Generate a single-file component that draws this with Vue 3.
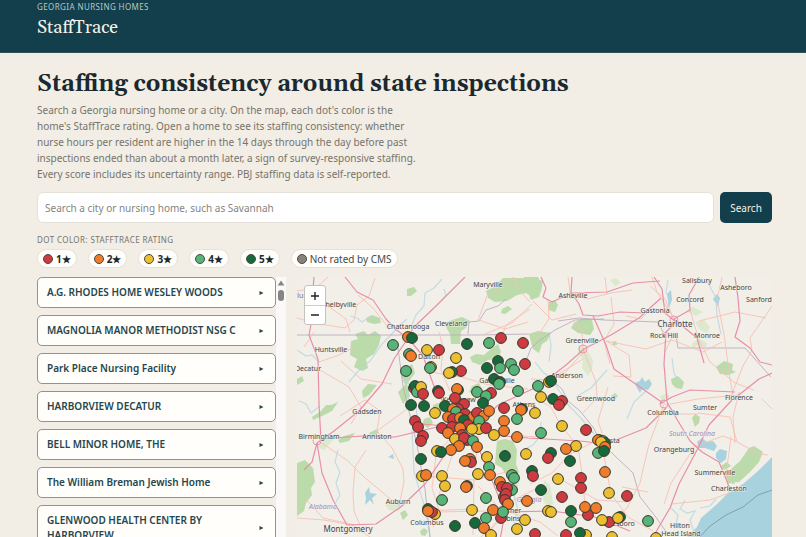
<script setup>
import { ref } from 'vue'

const query = ref('')

const legend = [
  { label: '1★', tone: 'r' },
  { label: '2★', tone: 'o' },
  { label: '3★', tone: 'y' },
  { label: '4★', tone: 'g' },
  { label: '5★', tone: 'd' },
]

const homes = [
  'A.G. RHODES HOME WESLEY WOODS',
  'MAGNOLIA MANOR METHODIST NSG C',
  'Park Place Nursing Facility',
  'HARBORVIEW DECATUR',
  'BELL MINOR HOME, THE',
  'The William Breman Jewish Home',
  'GLENWOOD HEALTH CENTER BY HARBORVIEW',
]

// Each entry: rating tone, then x and y on the map canvas.
const dots = `o408,337 d412,338 g393,345 g409,354 o411,356 g406,371 r414,388 d415,386 g417,392 y421,387 r423,394
y427,350 r439,350 d467,344 g489,343 r501,338 r523,343 y456,358 y431,367 g430,368 r461,371 d452,372 y449,373
d498,361 g511,364 d487,368 g500,368 g514,370 r525,364 d494,379 d500,382 g499,384 g518,391 g538,386 d458,390 o457,389
r491,393 g477,392 g486,396 d438,391 r439,393 r455,398 r464,404 d483,403 d411,405 d424,406 d445,406 y549,382 d551,381
y541,397 d553,399 r562,401 r559,405 y435,413 r458,409 o453,409 d456,414 g456,412 o448,417 r453,419 r465,414 o460,418
o473,417 r477,413 d464,420 o484,416 o489,411 r468,425 g479,421 r504,408 d522,409 o521,410 g517,419 y535,413 o504,421
o504,431 o517,437 g541,433 r442,428 r452,427 o448,433 o460,428 r462,435 y479,429 y472,429 r486,428 y494,435 r458,441
y455,439 r467,440 r464,438 g473,441 o477,447 o459,446 o451,450 y437,451 d441,452 r415,421 r418,427 r423,436 r421,441
d421,459 o470,459 r471,462 o465,461 y487,457 d505,456 y526,454 g489,467 y478,474 o490,475 y422,476 o426,475 y442,476
y445,486 d467,486 o466,487 g442,500 g512,475 g514,478 d532,471 r533,476 o500,482 r502,487 g512,490 r507,488 r504,497
r506,494 r505,500 o508,504 o527,501 g486,498 y472,510 o493,510 r501,518 g503,512 g486,518 d475,523 d455,526 o484,528
y491,535 y525,520 y517,529 r535,534 d428,509 y435,514 r432,512 o428,511 y562,426 r586,430 y576,446 o566,449 d551,453
r548,458 d570,461 d599,440 o598,440 g603,441 d605,443 y601,442 o605,447 g598,453 d604,451 o605,472 y558,479 r581,478
r581,488 d541,490 r562,497 y609,493 r627,496 y548,511 y551,512 d571,511 g571,522 r588,515 o585,507 o596,508 r609,522
y602,520 d620,517 y618,518 g648,521 r566,535 y586,535 d580,533 y612,537 y656,538`
  .trim()
  .split(/\s+/)
  .map((entry) => {
    const [x, y] = entry.slice(1).split(',').map(Number)
    return { tone: entry[0], x, y }
  })

const places = [
  ['Maryville', 488, 287], ['Asheville', 573, 298], ['Salisbury', 697, 283], ['Asheboro', 736, 290],
  ['Concord', 690, 302], ['Sanford', 759, 302], ['Gastonia', 655, 313], ['Rock Hill', 664, 338],
  ['Monroe', 707, 338], ['Shelbyville', 339, 307], ['Columbia', 320, 298, 'clip'], ['Chattanooga', 408, 329],
  ['Cleveland', 451, 326], ['Huntsville', 331, 352], ['Decatur', 308, 371], ['Dalton', 429, 359],
  ['Greenville', 582, 343], ['Anderson', 567, 378], ['Greenwood', 596, 401], ['Gainesville', 497, 383],
  ['Kennesaw', 459, 402], ['Athens', 524, 407], ['Florence', 739, 400], ['Gadsden', 367, 414], ['Columbia', 663, 415],
  ['Sumter', 705, 410], ['Birmingham', 319, 439], ['Anniston', 377, 439], ['Augusta', 606, 443],
  ['Orangeburg', 674, 452], ['Summerville', 715, 475], ['Charleston', 729, 491], ['Auburn', 398, 504],
  ['Columbus', 427, 525], ['Warner', 509, 513], ['Robins', 509, 521], ['Statesboro', 617, 526],
  ['Hilton', 680, 528], ['Head Island', 681, 536],
].map(([name, x, y, kind]) => ({ name, x, y, kind }))
</script>

<template>
  <div class="page">
    <header class="masthead">
      <p class="eyebrow">GEORGIA NURSING HOMES</p>
      <a class="brand" href="#">StaffTrace</a>
    </header>

    <main class="content">
      <h1>Staffing consistency around state inspections</h1>
      <p class="intro">
        Search a Georgia nursing home or a city. On the map, each dot's color is the
        home's StaffTrace rating. Open a home to see its staffing consistency: whether
        nurse hours per resident are higher in the 14 days through the day before past
        inspections ended than about a month later, a sign of survey-responsive staffing.
        Every score includes its uncertainty range. PBJ staffing data is self-reported.
      </p>

      <form class="search" @submit.prevent>
        <input
          v-model="query"
          type="text"
          aria-label="Search a city or nursing home"
          placeholder="Search a city or nursing home, such as Savannah"
        />
        <button type="submit">Search</button>
      </form>

      <p class="legend-title">DOT COLOR: STAFFTRACE RATING</p>
      <ul class="legend">
        <li v-for="item in legend" :key="item.label">
          <span class="swatch" :class="item.tone"></span><b>{{ item.label }}</b>
        </li>
        <li><span class="swatch n"></span>Not rated by CMS</li>
      </ul>

      <div class="browse">
        <div class="list-pane">
          <div class="list">
            <button v-for="home in homes" :key="home" type="button" class="home">
              <span>{{ home }}</span>
              <svg class="caret" viewBox="0 0 4 4" aria-hidden="true"><path d="M0 0L4 2L0 4Z" /></svg>
            </button>
          </div>
          <div class="scrollbar" aria-hidden="true">
            <svg viewBox="0 0 8 6"><path d="M4 0.5L7.4 5.5H0.6Z" /></svg>
            <span></span>
          </div>
        </div>

        <div class="map">
          <svg class="canvas" viewBox="297 277 475 260" preserveAspectRatio="xMinYMin slice">
            <g class="forest">
              <path d="M486 291l8-4 9-9h31l9 3-2 11-7 6-8-5-9 2-10 6-12 1-7-4z" />
              <path d="M524 277h14l4 9-3 11-8 3-3-8zM549 302l6-2 3 5-3 7-7-2zM502 309l6-3 4 3-7 5-4-1z" />
              <path d="M351 341l7-2-3-5 9-3 4 4 7-4 6 5-2 9-5 9-8 5 2 9-6 3-8-4 3-8-7-4z" />
              <path d="M366 318l6-3 8 3 1 5-7 1-7-2zM407 289l7-2 3 4-6 5-4 0zM449 321l13-4 8 4-4 7-5 3-1 13h-9l-1-10-4-7z" />
              <path d="M470 357l6-3 8 1 7-6 7-5 3 8-4 7-9 1-8 5-8-3zM472 386l7-3 3 6-6 6-7-3z" />
              <path d="M574 323l7-4 11 1 2 9-4 6-12-2-7-5zM529 334l9-3 13 2-4 8-5 3-3 9-6-4-2-7z" />
              <path class="pale" d="M578 345l8 4 7 11-1 10-4 6-6-8 1-9-5-6z" />
              <path d="M716 367l8-6 9 3-1 6 4 2-8 3-8-1zM671 379l7-3 6 6-2 7-6-1-4-4z" />
              <path class="pale" d="M692 343l7-4 8 4-1 4-9-1-5 2zM695 322l9-2 6 7-3 6-7-3z" />
              <path d="M400 372l12-8 3 9-8 11 3 12-7 8-5-12 7-7zM297 379l5-3 2 5-7 4zM312 417l9-6 5-6 5 0 7-3-6 9-10 5-9 4z" />
              <path d="M297 463l8-3 8 8 2 14-4 6 1 7-6 8-2 8-7 5z" />
              <path class="pale" d="M318 447l8-9 10-4 5 1-9 6-8 9z" />
              <path d="M338 440l6-4 11-3-6 8-9 2z" />
              <path d="M362 391l6-7 9 1-8 10-6 3zM369 433l8-4 2 4-9 4z" />
              <path d="M497 441l8-2 8 2 4 9-1 14 3 8-4 8-8-3-5-9-7-4 1-13z" />
              <path class="pale" d="M507 480l6-4 6 5-1 9-7 1zM385 505l8-4 10 4-4 6-10-1z" />
              <path d="M400 513l5-3 3 5-5 5zM420 531l4-3 4 3-3 5-4-1z" />
              <path d="M731 469l9-8 9-13 5-2 9 6-4 10-9 10-11 10-12 1z" />
              <path d="M692 418l3-4 5 3-1 6-4 4zM725 474l7 3 3 7-6-1zM721 466l6-4 4 4-7 4z" />
              <path d="M433 405l8-3 5 4-5 8-8-3zM424 419l6-2 3 6-5 5-5-3z" />
              <path class="pale" d="M544 480l6 5 3 18-3 9-7-12z" />
              <path d="M611 396l4-3 3 3-3 3zM612 342l4-1 1 4-4 0z" />
              <path class="pale" d="M610 280l6-2 5 5-6 3zM660 396l8-3 2 6-8 3zM686 311l7-4 10 5-7 4z" />
            </g>
            <g class="water">
              <path d="M772 457l-14 14-15 13-16 10-11 11-15 13-4 9-17 17h92z" />
              <path d="M697 442l5-4 5 4 6-1 4 5-3 5-9-3-6 0zM716 453l4-4 7 2-1 8-5 4-5-5z" />
              <path d="M635 383l5-2 2-4 3 5 4-3 3 5-4 6-6-1-2 4-3-5zM713 299l4-5 3 4-2 8zM667 294l4-4 1 10-3 8z" />
              <path d="M365 493l4-6 1 6 7 1-5 4 2 7-4-5-5 5 1-7zM388 457l5-3 1 5z" />
            </g>
            <g class="streams">
              <path d="M297 350l9 6 6-1 7 7M349 382l12-14 9-7 12-17 9-9 8-9 8-7" />
              <path d="M411 327l5-12 8-9 1-13 9-5 8-9M442 300l4-5-2-6M350 316l7 2 5 4 9-6" />
              <path d="M535 362l8 10 12 9 2 7 7 9 5 9 11 11 14 17M549 332l2 14-2 16" />
              <path d="M668 280l-2 12 4 8-4 12M707 281l9 17 1 18 4 18M672 358l2 15 5 9" />
              <path d="M338 450l-3 12 5 10-4 11 4 12-4 7M402 377l8 8-3 12 9 9 1 10" />
              <path d="M412 430l2 42 11 36 5 29M514 495l4 15-4 13M607 370l-16 18-15 9" />
              <path d="M685 500l-5 9 7 4 8-2-5 9 4 12M671 508l7 7-3 13M716 499l-6 7-10 2" />
              <path d="M299 401l7 3 5 9 9-7M525 449l8-4 7-9 1-14M627 419l7-17 12-11" />
            </g>
            <g class="borders">
              <path d="M297 335h180l52-1M398 348l5 38 14 59 8 44 5 48M468 334l1-12 10-1 7-11 12-4 8-7M558 321l21-3 25 2 54 2 5 10 13 3 2 13h67l26 29" />
              <path d="M526 361l5-13 8-7 16-11 20-10 29-1M552 380l10 9 6 12 12 10 13 16 8 15 14 14 18 17 7 24 15 19 12 17" />
              <path class="sea" d="M772 490l-14 5-15 12-17 8-16 11-14 15" />
            </g>
            <g class="roads minor">
              <path d="M297 318l17 5 31 5 9-8 3-15 12-9 6-18M324 303l22 16 4 13M297 291l19-3 12-11M398 328l-11-2-14-18-15-13M314 332l-10 15" />
              <path d="M319 362l20-7 15-8M341 361l20 18 31 5M320 370l29 17 12 20-10 17M377 431l3-20-15-11-25 16M377 431l30-22" />
              <path d="M366 450l-11 17-2 26 1 18 6 14M377 431l15 17 11 21 1 13-5 24M319 441l29 20 16 16 24 20 12 9M297 518l27 2 28 5 18 12M355 525l-32-7-18-20" />
              <path d="M478 320l9-24 12-7 15-12M439 332l4 15-2 23 9 21M485 334l27-11 20-19M514 277l4 12 12 13M479 320l26 9 23-7M530 309l-24 16-7 19" />
              <path d="M533 301l19 19 24-6M548 299l1 20-16 24M571 299l-3-22M571 293l16 6 24-6 21-3M607 294l-2-17M611 297l3 27-10 17 6 23M583 350l-1-20-12-13M585 350l-22 25-10 3M583 349l13 33 1 16-14 15" />
              <path d="M583 359l-34 21-18-1M606 341l23 14 2 22-18-1M606 341l40 8 26-9 31 12 19-10M673 335l-8 17M690 310l9 30 11 22 25 21 19 7M722 277l-5 22 7 35 6 45 4 20" />
              <path d="M650 286l15 13 9 20M650 310l-9 9-15-3M674 319l-17-27-5-15M699 321l36-9 31 6M772 306l-22 32 2 12-9 16-12 30M762 399l10 10M739 392l-6 25 2 26M670 404l28-5 40-4" />
              <path d="M698 413l32 4 7 25 22 12 9 1M664 403l13 11 21 0M690 454l-19 29-7 21M688 449l35-13 13 5M672 504l38-4 19-7M731 437l-5 38 3 18" />
              <path d="M536 398l15 9 10 19 17 20 5 35 2 26M530 484l22-11 17-18 26-14M605 442l-7-21 10-34M604 456l7 38 17 23 25 14M664 404l-15 40-9 39-13 25-17 15M562 480l35 20 30 2M622 487l26 5" />
              <path d="M430 372l31 5 28 8 39 4M424 420l-7 24M458 428l-22 28-4 32 7 22-6 17M461 429l-22 66M479 428l-5 50-1 57M478 486l25 26-16 24M423 476l52 4 43-11M436 512l55-1 53-26M520 436l22 1M472 509l-45 2M480 538l29-26 31 10 18 14" />
            </g>
            <g class="roads">
              <path d="M345 277l12 15 16 8 13 19 9 10 13 9M408 338l5-10 23-22 29-29M408 338l-14 21-12 25-23 27-25 20-17 12-5 19-8 8" />
              <path d="M314 277l-2 24 1 13-4 21 9 24 1 45 2 37M317 443l5 30 11 27 14 25M347 525l29-1 26-18 23-22 23-34 12-20M319 439l43-3 33 1 42-10" />
              <path d="M408 338l15 18 12 33 24 38M459 427l-38-3M459 427l15 3 24-25 41-19 27-21 18-16 27-14 28-17 22-20" />
              <path d="M541 277l5 11-3 9 9 5 20-9 35-1 26-9 27-2M572 277l-1 15 8 12 4 11 15 1 22-4 25 1M593 316l13 29 8 24 23 16 26 18" />
              <path d="M459 427l33 8 36 3 52 3 26 3 40-16 20-20M459 427l20 22 26 63-5 28M504 512l48-1 43 6 35 14" />
              <path d="M654 277l8 12 3 24 11 9-10 10-2 32 3 37M674 319l16-9-1-15 13-23M674 319l23 19 7 25" />
              <path d="M735 277l3 21 2 23-5 16 15 11 10 14 12 3M735 398l24-19 13-6M667 402l11 19 12 20 12 11 17 10 12 29" />
              <path d="M735 392l-45-2-18 7-12 7M732 400l-23 25-12 25-18 34-9 24-17 29" />
            </g>
            <g class="forks">
              <circle cx="317" cy="441" r="4" /><circle cx="583" cy="349" r="4" /><circle cx="664" cy="404" r="4" />
              <circle cx="674" cy="320" r="4" /><circle cx="459" cy="427" r="6" />
            </g>
            <g class="labels">
              <text v-for="(p, i) in places" :key="i" :x="p.x" :y="p.y" :class="{ edge: p.kind }">{{ p.name }}</text>
              <text class="major" x="675" y="327">Charlotte</text>
              <text class="major" x="348" y="532">Montgomery</text>
              <text class="state" x="692" y="436">South Carolina</text>
              <text class="state" x="323" y="509">Alabama</text>
              <text class="state" x="529" y="502">Georgia</text>
            </g>
            <g class="dots">
              <circle v-for="(d, i) in dots" :key="i" :cx="d.x" :cy="d.y" r="5.4" :class="d.tone" />
            </g>
          </svg>
          <div class="zoom">
            <button type="button" aria-label="Zoom in"><svg viewBox="0 0 10 10"><path d="M5 1V9M1 5H9" /></svg></button>
            <button type="button" aria-label="Zoom out"><svg viewBox="0 0 10 10"><path d="M1 5H9" /></svg></button>
          </div>
        </div>
      </div>
    </main>
  </div>
</template>

<style>
body {
  margin: 0;
  background: #f2ede5;
}
</style>

<style scoped>
* {
  box-sizing: border-box;
}
.page {
  display: flex;
  flex-direction: column;
  height: 100vh;
  overflow: hidden;
  background: #f2ede5;
  color: #1b292f;
  font-family: "Noto Sans", "Open Sans", sans-serif;
  font-size: 10px;
}
p,
h1,
ul {
  margin: 0;
  padding: 0;
}
button,
input {
  font: inherit;
}
.masthead {
  flex: none;
  padding: 2px 37px 13px;
  background: #123f4b;
  border-bottom: 1px solid #31535a;
}
.eyebrow {
  color: #b7c7c8;
  font-size: 8px;
  line-height: 10px;
  letter-spacing: 0.4px;
}
.brand {
  display: block;
  margin-top: 5px;
  color: #f5f1e9;
  font-family: Gelasio, Georgia, "Liberation Serif", serif;
  font-size: 18px;
  line-height: 22px;
  text-decoration: none;
}
.content {
  flex: 1;
  min-height: 0;
  display: flex;
  flex-direction: column;
  padding: 16px 34px 0 37px;
}
h1 {
  font-family: Gelasio, Georgia, "Liberation Serif", serif;
  font-size: 23px;
  font-weight: 700;
  line-height: 32px;
}
.intro {
  max-width: 384px;
  margin-top: 1px;
  color: #77746b;
  line-height: 16px;
}
.search {
  display: flex;
  gap: 6px;
  margin-top: 10px;
}
.search input {
  flex: 1;
  min-width: 0;
  height: 31px;
  padding: 0 7px;
  border: 1px solid #e6e1d8;
  border-radius: 6px;
  background: #fff;
  color: #1b292f;
}
.search input::placeholder {
  color: #85857f;
  opacity: 1;
}
.search button {
  width: 52px;
  height: 31px;
  padding: 0;
  border: 0;
  border-radius: 5px;
  background: #123f4b;
  color: #f5f1e9;
}
.legend-title {
  margin-top: 11px;
  color: #77746b;
  font-size: 8px;
  line-height: 12px;
  letter-spacing: 0.4px;
}
.legend {
  display: flex;
  flex-wrap: wrap;
  gap: 11px;
  margin-top: 3px;
  list-style: none;
}
.legend li {
  display: flex;
  align-items: center;
  gap: 3px;
  height: 19px;
  padding: 0 5px;
  border: 1px solid #e6e1d8;
  border-radius: 10px;
  background: #fffefa;
  color: #3f4a4c;
}
.legend b {
  color: #1b292f;
}
.swatch {
  width: 10px;
  height: 10px;
  border: 1px solid #4a4a40;
  border-radius: 50%;
}
.swatch.r { background: #cf3a40; }
.swatch.o { background: #ee7c2b; }
.swatch.y { background: #ecbf31; }
.swatch.g { background: #57b478; }
.swatch.d { background: #17693c; }
.swatch.n { background: #878579; }
.browse {
  flex: 1;
  min-height: 0;
  display: grid;
  grid-template-columns: 249px 1fr;
  gap: 11px;
  margin-top: 9px;
}
.list-pane {
  display: flex;
  min-height: 0;
}
.list {
  flex: 1;
  display: flex;
  flex-direction: column;
  gap: 7px;
  min-height: 0;
  overflow: hidden;
}
.home {
  flex: none;
  display: flex;
  align-items: center;
  justify-content: space-between;
  gap: 16px;
  padding: 7px 11px 7px 9px;
  border: 1px solid #84979a;
  border-radius: 5px;
  background: #fffefa;
  color: #24464e;
  font-weight: 600;
  line-height: 15px;
  min-height: 31px;
  text-align: left;
}
.caret {
  flex: none;
  width: 5px;
  height: 4px;
  fill: #24464e;
}
.scrollbar {
  display: flex;
  flex-direction: column;
  align-items: center;
  gap: 4px;
  width: 10px;
  padding-top: 3px;
  background: #faf9f7;
}
.scrollbar svg {
  width: 8px;
  height: 6px;
  fill: #858585;
}
.scrollbar span {
  width: 6px;
  height: 11px;
  border-radius: 3px;
  background: #858585;
}
.map {
  position: relative;
  min-height: 0;
  overflow: hidden;
  border-radius: 6px 6px 0 0;
  background: #f2efe9;
}
.canvas {
  display: block;
  width: 100%;
  height: 100%;
}
.forest { fill: #b3d7a1; opacity: 0.85; }
.forest .pale { fill: #d9e8c8; }
.water { fill: #a9d2df; }
.streams { fill: none; stroke: #b4d8e2; stroke-width: 1.2; opacity: 0.8; }
.borders { fill: none; stroke: #bcaebd; stroke-width: 0.9; }
.borders .sea { stroke: #8096b6; }
.roads { fill: none; stroke: #e88fa6; stroke-width: 1.2; stroke-linejoin: round; }
.roads.minor { stroke: #f7bfb3; stroke-width: 0.9; }
.forks { fill: none; stroke: #e88fa6; stroke-width: 0.9; }
.labels text {
  fill: #444;
  stroke: #f2efe9;
  stroke-width: 1px;
  paint-order: stroke;
  font-size: 7px;
  text-anchor: middle;
}
.labels .edge { fill: #77777a; text-anchor: end; }
.labels .major { font-size: 8px; }
.labels .state { fill: #a58bb0; font-style: italic; }
.dots circle { stroke: #36362b; stroke-width: 1; }
.dots .r { fill: #cf3a40; }
.dots .o { fill: #ee7c2b; }
.dots .y { fill: #ecbf31; }
.dots .g { fill: #57b478; }
.dots .d { fill: #17693c; }
.zoom {
  position: absolute;
  top: 8px;
  left: 7px;
  display: flex;
  flex-direction: column;
  border: 1px solid #c5c2bc;
  border-radius: 3px;
  background: #fff;
}
.zoom button {
  display: grid;
  place-items: center;
  width: 20px;
  height: 19px;
  padding: 0;
  border: 0;
  background: none;
}
.zoom button + button {
  border-top: 1px solid #ccc;
}
.zoom svg {
  width: 10px;
  height: 10px;
  fill: none;
  stroke: #222;
  stroke-width: 1.4;
}
</style>
